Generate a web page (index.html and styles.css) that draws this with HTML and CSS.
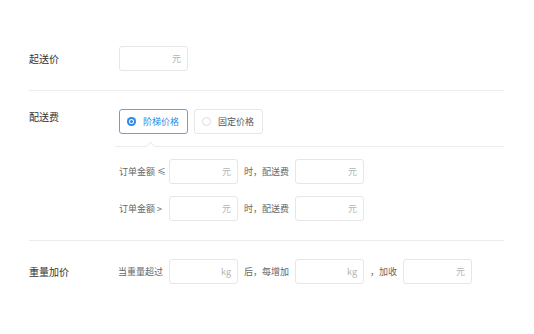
FILE: index.html
```html
<!DOCTYPE html>
<html lang="zh-CN">
<head>
  <meta charset="UTF-8" />
  <title>配送设置</title>
  <link rel="stylesheet" href="styles.css">
</head>
<body>
  <form class="settings">
    <div class="section first">
      <div class="label">起送价</div>
      <div class="unit-input"><input type="text"><span>元</span></div>
    </div>

    <div class="section fee">
      <div class="label">配送费</div>
      <div class="fee-body">
        <div class="radios">
          <label class="radio checked"><i></i>阶梯价格</label>
          <label class="radio"><i></i>固定价格</label>
        </div>
        <div class="panel">
          <div class="line">
            <span class="text">订单金额 ≤</span>
            <div class="unit-input"><input type="text"><span>元</span></div>
            <span class="text">时，配送费</span>
            <div class="unit-input"><input type="text"><span>元</span></div>
          </div>
          <div class="line">
            <span class="text">订单金额 &gt;</span>
            <div class="unit-input"><input type="text"><span>元</span></div>
            <span class="text">时，配送费</span>
            <div class="unit-input"><input type="text"><span>元</span></div>
          </div>
        </div>
      </div>
    </div>

    <div class="section last">
      <div class="label">重量加价</div>
      <div class="line weight">
        <span class="text">当重量超过</span>
        <div class="unit-input"><input type="text"><span>kg</span></div>
        <span class="text">后，每增加</span>
        <div class="unit-input"><input type="text"><span>kg</span></div>
        <span class="text">，加收</span>
        <div class="unit-input"><input type="text"><span>元</span></div>
      </div>
    </div>
  </form>
</body>
</html>
```

FILE: styles.css
```css
body {
  margin: 0;
  background: #fff;
  font-family: "Noto Sans CJK SC", "Noto Sans", sans-serif;
  color: #333;
}

.settings {
  width: 475px;
  margin-left: 29px;
}

.section {
  display: flex;
  align-items: center;
  border-bottom: 1px solid #ececec;
}

.section.first {
  padding: 46px 0 19px;
}

.section.fee {
  align-items: flex-start;
  padding: 18px 0 19px;
}

.section.last {
  border-bottom: none;
  padding: 18px 0 40px;
}

.label {
  width: 90px;
  font-size: 10px;
  line-height: 16px;
  color: #333;
}

.unit-input {
  display: flex;
  align-items: center;
  width: 69px;
  height: 25px;
  box-sizing: border-box;
  border: 1px solid #e6e6e6;
  border-radius: 3px;
  background: #fff;
}

.unit-input input {
  flex: 1;
  min-width: 0;
  border: none;
  outline: none;
  background: transparent;
  padding: 0 4px;
  font-size: 9px;
}

.unit-input span {
  padding-right: 6px;
  font-size: 9px;
  color: #b3b3b3;
}

.fee-body {
  flex: 1;
}

.radios {
  display: flex;
  gap: 6px;
}

.radio {
  display: flex;
  align-items: center;
  width: 69px;
  height: 25px;
  box-sizing: border-box;
  border: 1px solid #e6e6e6;
  border-radius: 3px;
  padding-left: 7px;
  font-size: 9px;
  color: #555;
}

.radio i {
  width: 7px;
  height: 7px;
  border: 1px solid #dcdcdc;
  border-radius: 50%;
  margin-right: 7px;
}

.radio.checked {
  border-color: #5fa2ec;
  color: #2f88e8;
}

.radio.checked i {
  width: 9px;
  height: 9px;
  border: none;
  background: #2f88e8;
  box-shadow: inset 0 0 0 2px #2f88e8, inset 0 0 0 3px #fff;
}

.panel {
  position: relative;
  margin: 12px 0 0 -4px;
  padding: 12px 0 0 4px;
  border-top: 1px solid #ececec;
}

.panel::before {
  content: "";
  position: absolute;
  top: -4px;
  left: 32px;
  width: 6px;
  height: 6px;
  background: #fff;
  border-left: 1px solid #ececec;
  border-top: 1px solid #ececec;
  transform: rotate(45deg);
}

.line {
  display: flex;
  align-items: center;
  gap: 6px;
}

.line.weight {
  margin-left: -1px;
}

.panel .line + .line {
  margin-top: 12px;
}

.text {
  font-size: 9px;
  color: #666;
  white-space: nowrap;
}

.panel .text:first-child {
  width: 44px;
}
```
